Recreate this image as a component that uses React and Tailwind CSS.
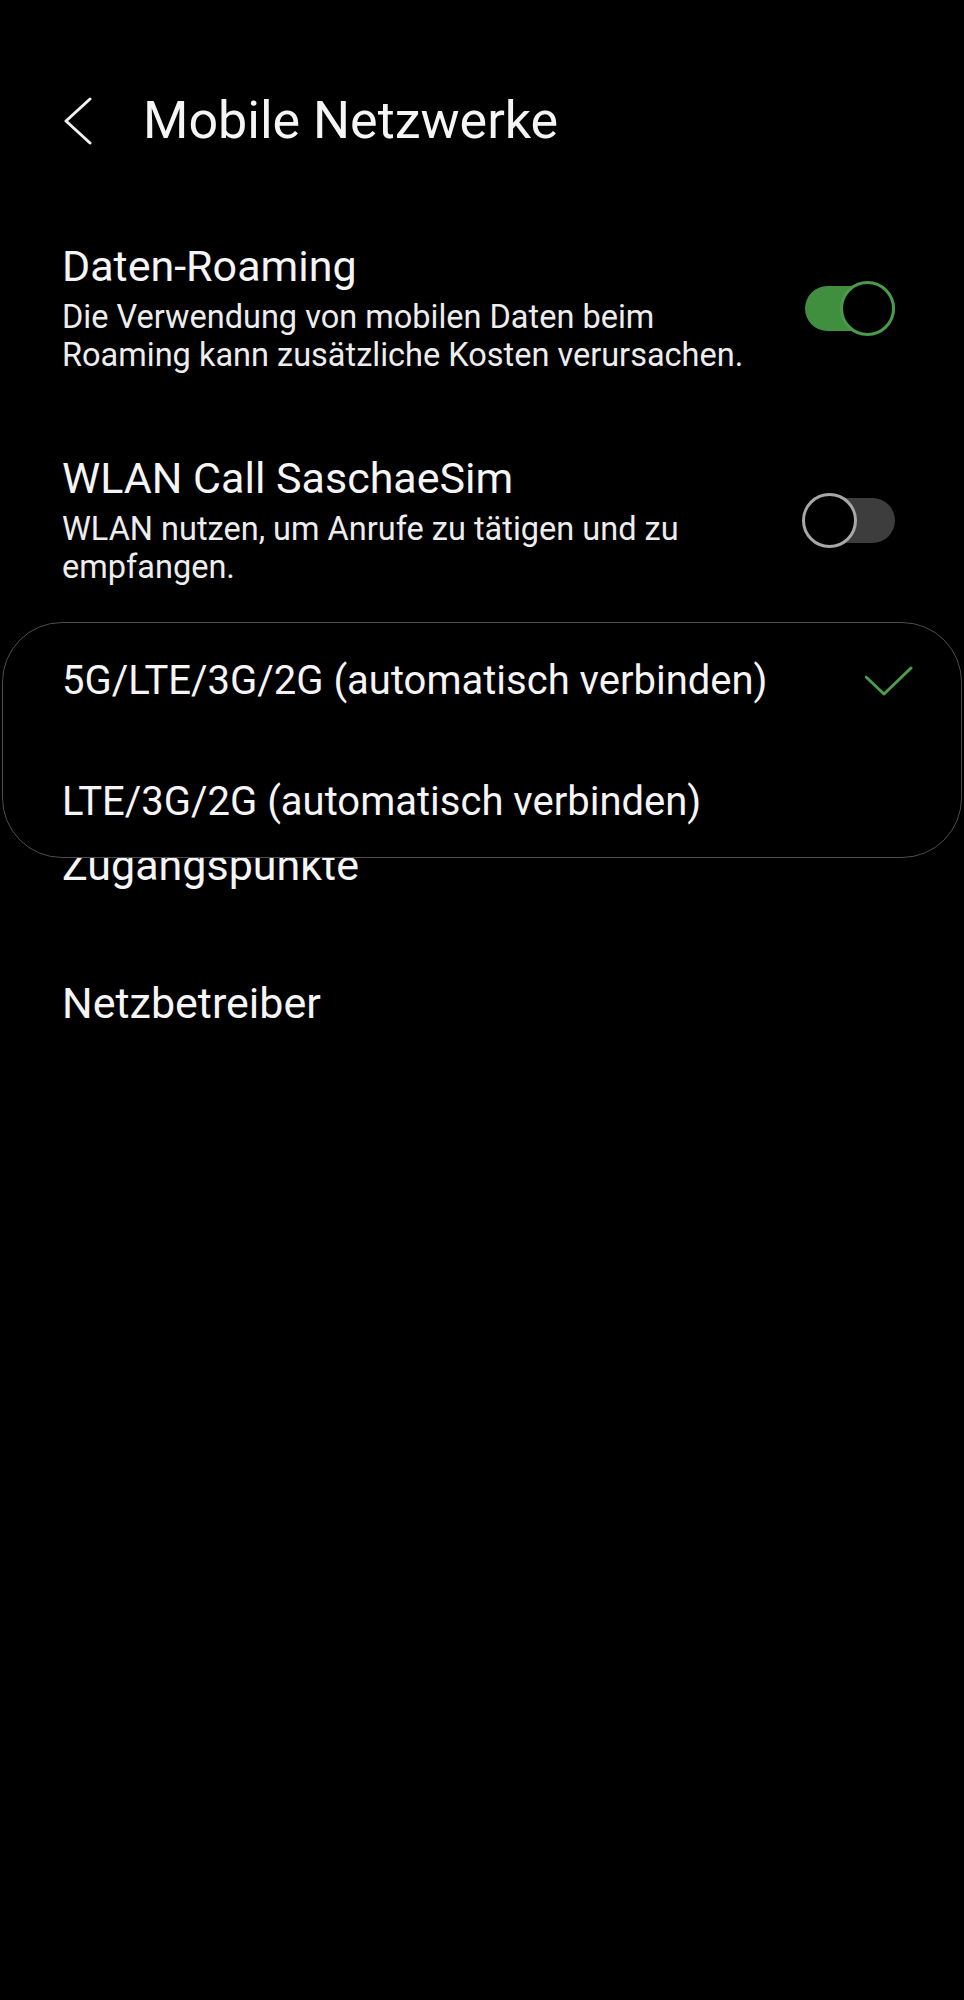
import { useState } from "react";

function Toggle({ on }) {
    return (
        <div className="relative w-[93px] h-[55px] shrink-0">
            <div className={`absolute left-[3px] right-0 top-[5px] h-[45px] rounded-full ${on ? 'bg-[#3f8f3f]' : 'bg-[#3d3d3d]'}`} />
            <div className={`absolute top-0 w-[55px] h-[55px] rounded-full bg-black border-[3px] ${on ? 'right-0 border-[#4a9a4a]' : 'left-0 border-[#a8a8a8]'}`} />
        </div>
    );
}

function SwitchRow({ title, summary, on }) {
    return (
        <div className="flex items-center gap-5 pl-[62px] pr-[69px] py-10">
            <div className="flex-1">
                <div className="text-[43px] leading-[48px] text-[#f5f5f5]">{title}</div>
                <div className="mt-2 text-[32.5px] leading-[38px] text-[#ededed]">{summary}</div>
            </div>
            <Toggle on={on} />
        </div>
    );
}

export default function App() {
    const [mode] = useState(0);
    const modes = [
        "5G/LTE/3G/2G (automatisch verbinden)",
        "LTE/3G/2G (automatisch verbinden)",
    ];

    return (
        <div className="relative w-[964px] min-h-[2000px] bg-black [font-family:Roboto,'Noto_Sans',sans-serif] overflow-hidden">
            {/* Header */}
            <div className="flex items-center h-[80px] mt-[81px] mb-[41px]">
                <svg className="ml-[62px]" width="32" height="48" viewBox="0 0 32 48" fill="none">
                    <polyline points="28,2 4,24 28,46" stroke="#f0f0f0" strokeWidth="3" strokeLinecap="round" strokeLinejoin="round" />
                </svg>
                <h1 className="ml-[49px] text-[52px] leading-[80px] text-[#f5f5f5]">Mobile Netzwerke</h1>
            </div>

            <SwitchRow
                title="Daten-Roaming"
                summary="Die Verwendung von mobilen Daten beim Roaming kann zusätzliche Kosten verursachen."
                on
            />
            <SwitchRow
                title="WLAN Call SaschaeSim"
                summary="WLAN nutzen, um Anrufe zu tätigen und zu empfangen."
                on={false}
            />

            {/* Netzwerkmodus (covered by the popup) */}
            <div className="pl-[62px] pr-[69px] pt-10 pb-[36px]">
                <div className="text-[43px] leading-[48px] text-[#f5f5f5]">Netzwerkmodus</div>
                <div className="mt-2 text-[32.5px] leading-[38px] text-[#4a9a4a]">{modes[mode]}</div>
            </div>

            <div className="pl-[62px] py-[45px] text-[43px] leading-[48px] text-[#f5f5f5]">Zugangspunkte</div>
            <div className="pl-[62px] py-[45px] text-[43px] leading-[48px] text-[#f5f5f5]">Netzbetreiber</div>

            {/* Network mode popup */}
            <div className="absolute left-[2px] right-[2px] top-[622px] rounded-[60px] border border-[#4d4d4d] bg-black pt-[34px] pb-[31px]">
                {modes.map((m, i) => (
                    <div key={m} className={`flex items-center justify-between pl-[59px] pr-[48px] ${i > 0 ? 'mt-[73px]' : ''}`}>
                        <span className="text-[40px] leading-[48px] text-[#f5f5f5]">{m}</span>
                        {i === mode && (
                            <svg width="48" height="30" viewBox="0 0 48 30" fill="none">
                                <polyline points="1,11 19,28 46,2" stroke="#4a9d4a" strokeWidth="3" strokeLinecap="round" strokeLinejoin="round" />
                            </svg>
                        )}
                    </div>
                ))}
            </div>
        </div>
    );
}
